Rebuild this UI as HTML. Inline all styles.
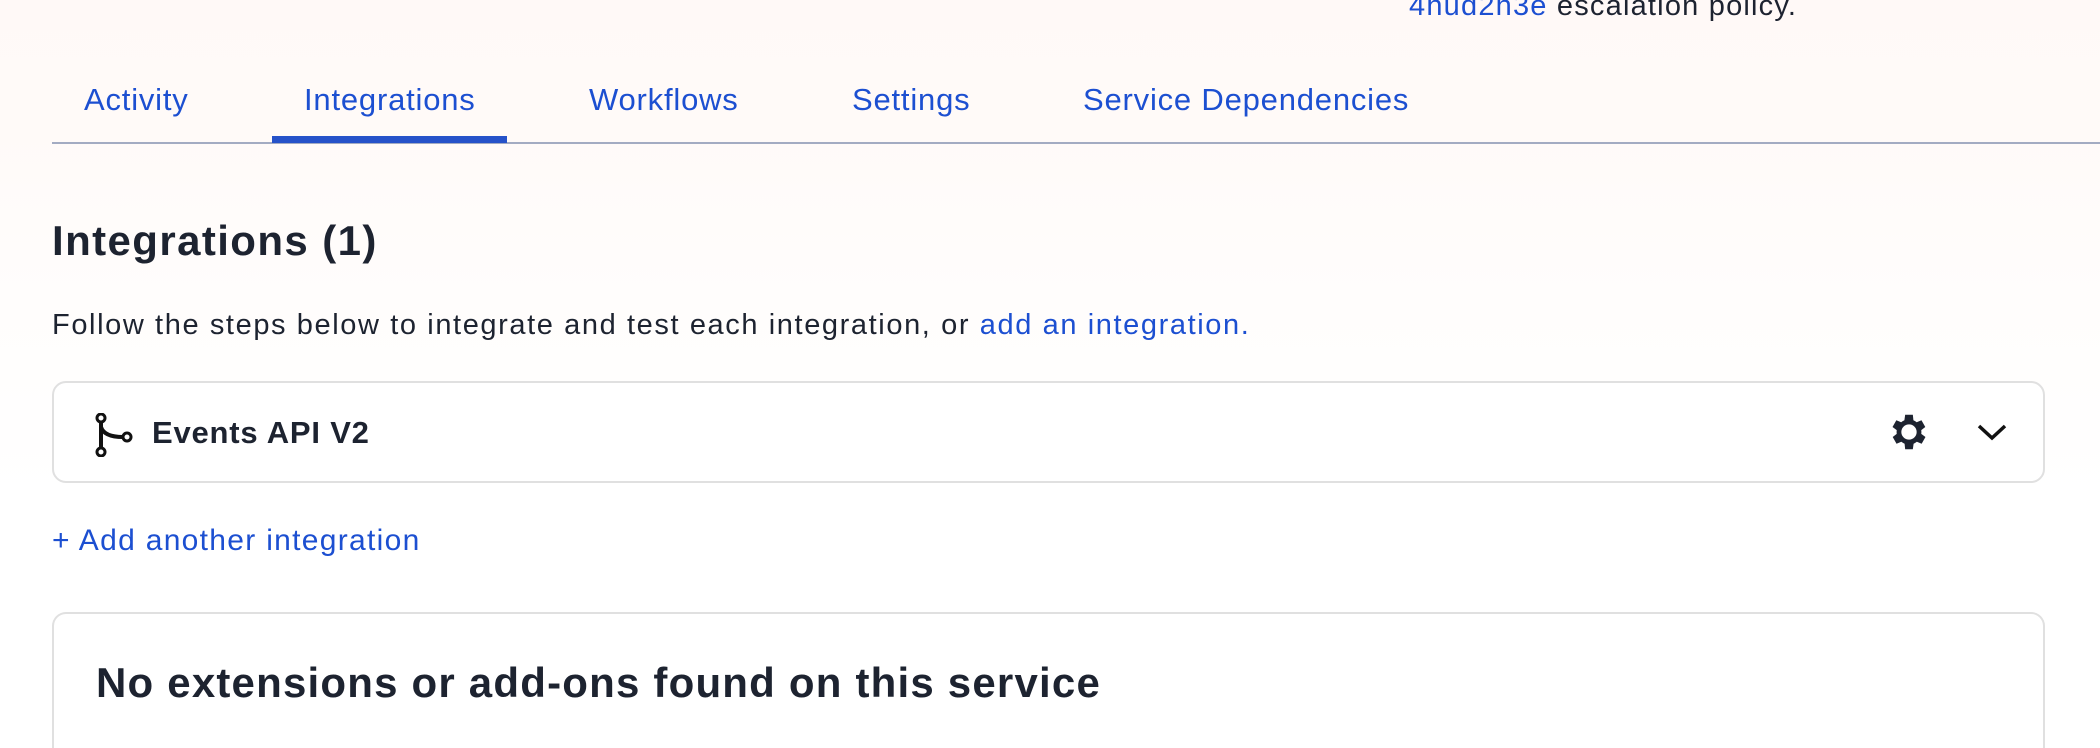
<!DOCTYPE html>
<html><head><meta charset="utf-8"><style>
html,body{margin:0;padding:0;width:2100px;height:748px;overflow:hidden;}
body{position:relative;font-family:"Liberation Sans",sans-serif;color:#1d2330;background:linear-gradient(#fff9f7 0,#fffaf8 120px,#fffdfc 300px,#ffffff 500px);}
.abs{position:absolute;white-space:nowrap;}
.blue{color:#1c4fd1;}
.tab{position:absolute;top:82px;font-size:31px;letter-spacing:0.8px;color:#1c4fd1;}
.card{position:absolute;left:52px;width:1993px;border:2px solid #e0e0e0;border-radius:14px;background:#fff;box-sizing:border-box;}
</style></head><body>
<div class="abs" style="left:1409px;top:-10px;font-size:29px;letter-spacing:1.2px;"><span class="blue">4hud2h3e</span> escalation policy.</div>
<div class="tab" style="left:84px">Activity</div>
<div class="tab" style="left:304px">Integrations</div>
<div class="tab" style="left:589px">Workflows</div>
<div class="tab" style="left:852px">Settings</div>
<div class="tab" style="left:1083px">Service Dependencies</div>
<div class="abs" style="left:52px;top:142px;width:2048px;height:2px;background:#a3abc2;"></div>
<div class="abs" style="left:272px;top:136px;width:235px;height:7px;background:#2652c9;"></div>
<div class="abs" style="left:52px;top:217px;font-size:42px;letter-spacing:1.4px;font-weight:bold;">Integrations (1)</div>
<div class="abs" style="left:52px;top:309px;font-size:29px;letter-spacing:1.6px;">Follow the steps below to integrate and test each integration, or <span class="blue">add an integration.</span></div>
<div class="card" style="top:381px;height:102px;">
<svg class="abs" style="left:40px;top:30px" width="40" height="44" viewBox="0 0 40 44"><circle cx="7" cy="5" r="4" fill="none" stroke="#111" stroke-width="3"/><circle cx="7" cy="39" r="4" fill="none" stroke="#111" stroke-width="3"/><circle cx="33" cy="24" r="4" fill="none" stroke="#111" stroke-width="3"/><path d="M7 9V35M7 14Q10 24 29 24" fill="none" stroke="#111" stroke-width="4"/></svg>
<div class="abs" style="left:98px;top:32px;font-size:31px;letter-spacing:0.8px;font-weight:bold;">Events API V2</div>
<svg class="abs" style="left:1832px;top:26px" width="46" height="46" viewBox="0 0 24 24"><path fill="#1d2330" d="M19.4 13a7.8 7.8 0 0 0 0-2l2.1-1.6-2-3.5-2.5 1a7.4 7.4 0 0 0-1.7-1L15 3h-4l-.4 2.9a7.4 7.4 0 0 0-1.7 1l-2.5-1-2 3.5L6.6 11a7.8 7.8 0 0 0 0 2l-2.1 1.6 2 3.5 2.5-1a7.4 7.4 0 0 0 1.7 1L11 21h4l.4-2.9a7.4 7.4 0 0 0 1.7-1l2.5 1 2-3.5zM13 16a4 4 0 1 1 0-8 4 4 0 0 1 0 8z" transform="translate(-1 0)"/></svg>
<svg class="abs" style="left:1922px;top:38px" width="32" height="22" viewBox="0 0 32 22"><path d="M3 5l13 12 13-12" fill="none" stroke="#111" stroke-width="3.5"/></svg>
</div>
<div class="abs blue" style="left:52px;top:524px;font-size:30px;letter-spacing:1.3px;">+ Add another integration</div>
<div class="card" style="top:612px;height:136px;border-bottom:none;border-radius:14px 14px 0 0;">
<div class="abs" style="left:42px;top:45px;font-size:42px;letter-spacing:1.2px;font-weight:bold;">No extensions or add-ons found on this service</div>
</div>
</body></html>
